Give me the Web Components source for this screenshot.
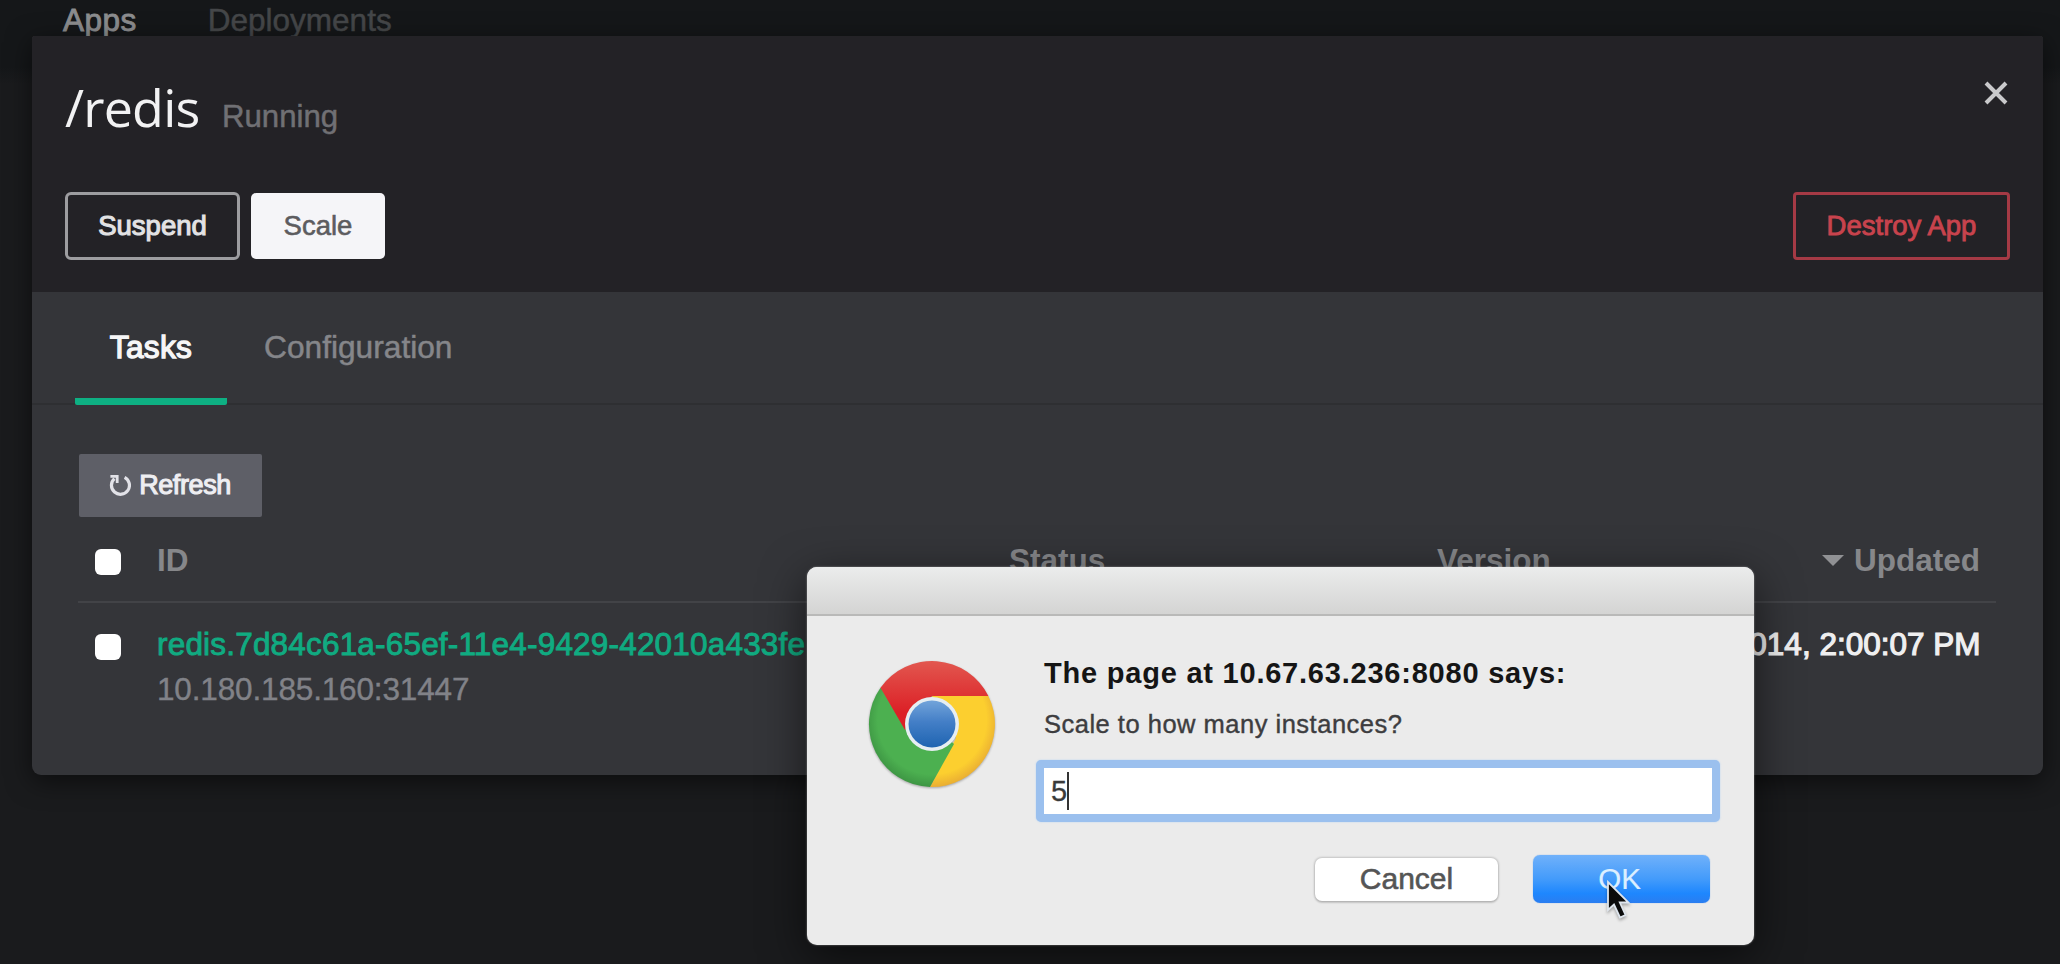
<!DOCTYPE html>
<html lang="en">
<head>
<meta charset="utf-8">
<title>Marathon</title>
<style>
html, body { margin: 0; height: 100%; }
body { overflow: hidden; background: #1a1b1c; font-family: "Liberation Sans", Arial, sans-serif; }
</style>
</head>
<body>
<marathon-page></marathon-page>
<script>
const define = (name, html) => customElements.define(name, class extends HTMLElement {
  constructor() {
    super();
    const t = document.createElement('template');
    t.innerHTML = html;
    this.attachShadow({ mode: 'open' }).append(t.content.cloneNode(true));
  }
});

define('top-nav', `
<style>
:host { display: flex; height: 84px; box-sizing: border-box; padding-left: 63px; gap: 71px;
  background: linear-gradient(#151719 80%, #1a1b1d); font-size: 31.5px; line-height: 40px; color: #454749; -webkit-text-stroke: .5px; }
.on { color: #8c8d8f; -webkit-text-stroke: .9px; letter-spacing: .5px; }
</style><span class="on">Apps</span><span>Deployments</span>`);

define('app-button', `
<style>
:host { display: flex; align-items: center; justify-content: center; box-sizing: border-box;
  width: var(--w); height: 68px; border: 3px solid #9d9da0; border-radius: 6px; color: #e2e2e4;
  font-size: 27.5px; -webkit-text-stroke: 1.1px; }
:host([kind=solid]) { height: 66px; border: 0; border-radius: 5px; background: #f5f5f8; color: #5c5c5f; -webkit-text-stroke: .6px; }
:host([kind=danger]) { border-color: #a53a45; color: #c8434d; border-radius: 4px; -webkit-text-stroke: .9px; }
:host([kind=gray]) { height: 63px; border: 0; border-radius: 2px; background: #5e5f67; color: #eeeef2; font-size: 27px; letter-spacing: -.4px; gap: 8px; padding-right: 1px; -webkit-text-stroke: 1.1px; }
</style><slot></slot>`);

define('close-icon', `
<style>:host { display: block; width: 24px; height: 24px; } svg { display: block; }</style>
<svg width="24" height="24" viewBox="0 0 24 24" stroke="#c9c9cb" stroke-width="4" fill="none"><path d="M2 2L22 22M22 2L2 22"/></svg>`);

define('refresh-icon', `
<style>:host { display: block; width: 22px; height: 22px; margin-top: -2px; } svg { display: block; }</style>
<svg width="22" height="22" viewBox="0 0 22 22" fill="none" stroke="#e2e2e8" stroke-width="3.2"><path d="M15.6 3.3A9 9 0 1 1 5.4 4.6"/><path d="M1.4 2.4H8.2V9" stroke-width="2.8"/></svg>`);

define('app-header', `
<style>
:host { display: block; box-sizing: border-box; height: 256px; padding: 41px 33px 32px; background: #232226; }
.title { display: flex; align-items: baseline; height: 60px; }
h1 { margin: 0; width: 137px; font: 400 52px/60px "Open Sans", sans-serif; color: #f2f2f3; letter-spacing: -.8px; }
.state { margin-left: 20px; font-size: 31.2px; line-height: 40px; color: #707074; -webkit-text-stroke: .5px; }
close-icon { margin: 4px 2px 0 auto; align-self: flex-start; }
.actions { display: flex; align-items: center; gap: 11px; margin-top: 55px; }
.last { margin-left: auto; }
</style>
<div class="title"><h1>/redis</h1><span class="state">Running</span><close-icon></close-icon></div>
<div class="actions">
  <app-button style="--w:175px">Suspend</app-button>
  <app-button kind="solid" style="--w:134px">Scale</app-button>
  <app-button class="last" kind="danger" style="--w:217px">Destroy App</app-button>
</div>`);

define('tab-bar', `
<style>
:host { display: flex; gap: 37px; height: 113px; box-sizing: border-box; padding-left: 43px;
  background: linear-gradient(#2e2f32, #2e2f32) bottom / 100% 2px no-repeat; font-size: 31.7px; line-height: 110px; color: #85868a; -webkit-text-stroke: .5px; }
.on { width: 152px; height: 113px; box-sizing: border-box; border-bottom: 7px solid #0eb083; border-radius: 0 0 2px 2px; text-align: center; color: #f6f6f7; letter-spacing: .3px; -webkit-text-stroke: 1.3px; }
</style><span class="on">Tasks</span><span>Configuration</span>`);

define('check-box', `
<style>:host { display: block; width: 26px; height: 26px; border-radius: 6px; background: #fff; }</style>`);

define('task-table', `
<style>
:host { display: block; margin: 0 47px 0 46px; font-size: 31.5px; }
.row { display: grid; grid-template-columns: 62px 852px 428px 1fr auto; padding: 0 14px 0 17px; }
.head { height: 86px; box-sizing: border-box; padding-top: 2px; border-bottom: 2px solid #424347; align-items: center; font-weight: 700; color: #86878a; }
.head check-box { margin-top: 3px; }
.updated { display: flex; align-items: center; justify-content: flex-end; gap: 9px; padding-right: 2px; }
.data { padding-top: 19px; line-height: 45px; align-items: start; }
.data check-box { margin-top: 12px; }
.id { color: #10ab81; letter-spacing: .19px; -webkit-text-stroke: .9px; }
.host { color: #818288; letter-spacing: -.15px; -webkit-text-stroke: .4px; }
.when { grid-column: 4 / -1; text-align: right; padding-right: 1.5px; color: #efeff0; -webkit-text-stroke: 1.2px; }
</style>
<div class="row head"><check-box></check-box><span>ID</span><span>Status</span><span>Version</span>
  <span class="updated"><svg width="24" height="12" viewBox="0 0 24 12"><path d="M1 1H23L12 12Z" fill="#909194"/></svg>Updated</span></div>
<div class="row data"><check-box></check-box>
  <div><div class="id">redis.7d84c61a-65ef-11e4-9429-42010a433fe</div><div class="host">10.180.185.160:31447</div></div>
  <span class="when">014, 2:00:07 PM</span></div>`);

define('app-modal', `
<style>
:host { display: block; box-sizing: border-box; width: 2011px; height: 739px; overflow: hidden; border-radius: 3px 3px 9px 9px;
  background: #343539; box-shadow: 0 6px 26px rgba(0,0,0,.55); }
.tools { padding: 49px 0 0 47px; }
</style>
<app-header></app-header><tab-bar></tab-bar>
<div class="tools"><app-button kind="gray" style="--w:183px"><refresh-icon></refresh-icon>Refresh</app-button></div>
<task-table></task-table>`);

define('chrome-logo', `
<style>:host { display: block; width: 128px; height: 130px; filter: drop-shadow(0 1px 1px rgba(0,0,0,.3)); } svg { display: block; }</style>
<svg width="128" height="130" viewBox="-64 -64 128 130">
<defs>
<linearGradient id="r" x1="0" y1="0" x2="0" y2="1"><stop offset="0" stop-color="#e2574f"/><stop offset=".75" stop-color="#dc2026"/></linearGradient>
<linearGradient id="b" x1="0" y1="0" x2="0" y2="1"><stop offset="0" stop-color="#72a4da"/><stop offset=".45" stop-color="#447fc7"/><stop offset="1" stop-color="#1e64b1"/></linearGradient>
<radialGradient id="y" gradientUnits="userSpaceOnUse" cx="0" cy="-4" r="68"><stop offset=".8" stop-color="#fccf2f"/><stop offset="1" stop-color="#e8ab33"/></radialGradient>
<radialGradient id="g" gradientUnits="userSpaceOnUse" cx="0" cy="-4" r="68"><stop offset=".8" stop-color="#4cb050"/><stop offset="1" stop-color="#3c9342"/></radialGradient>
</defs>
<path d="M0-28H56.4A63 63 0 0 1-2 63L24 14Z" fill="url(#y)"/>
<path d="M-51.5-36.3A63 63 0 0 0-2 63L22 20L0 0Z" fill="url(#g)"/>
<path d="M-51.5-36.3A63 63 0 0 1 56.4-28H0L-27 6Z" fill="url(#r)"/>
<circle r="27" fill="#e6eef2"/><circle r="23.5" fill="url(#b)"/>
</svg>`);

define('mac-button', `
<style>
:host { display: flex; align-items: center; justify-content: center; width: 183px; height: 43px; border-radius: 7px;
  background: #fff; color: #555; font-size: 30px; -webkit-text-stroke: .6px; box-shadow: 0 0 2px 1px rgba(0,0,0,.17), 0 2px 2px rgba(0,0,0,.12); }
:host([primary]) { box-sizing: border-box; width: 177px; height: 48px; padding-right: 4px; font-size: 29.5px; background: linear-gradient(#70b1fa, #439bfb 50%, #1e87fe 80%, #2a7df0); color: #dcefff; -webkit-text-stroke: .2px; box-shadow: 0 0 1px #4d93e6; }
</style><slot></slot>`);

define('prompt-field', `
<style>
:host { display: flex; align-items: center; box-sizing: border-box; width: 684px; height: 62px; border: 8px solid #9bc0ee; border-radius: 5px;
  padding-left: 7px; background: #fff; color: #3a3a3a; font-size: 29px; -webkit-text-stroke: .3px; box-shadow: 0 0 2px #b7d3f3; }
i { width: 2px; height: 38px; margin-left: -.5px; background: #333; }
</style><slot></slot><i></i>`);

define('prompt-dialog', `
<style>
:host { display: flex; flex-direction: column; box-sizing: border-box; width: 947px; height: 378px; border-radius: 10px; overflow: hidden;
  background: #ebebeb; box-shadow: 0 0 2px rgba(255,255,255,.5), 0 12px 45px rgba(0,0,0,.6); }
.bar { height: 49px; box-sizing: border-box; flex: none; border-bottom: 2px solid #b9b9b8; background: linear-gradient(#ebecec, #d4d4d3); }
.body { display: grid; grid-template-columns: 168px 684px; padding-left: 61px; }
chrome-logo { margin-top: 44px; }
.text { padding: 37px 0 0; }
h2 { margin: 0 0 11px 8px; font-size: 29px; line-height: 40px; letter-spacing: .78px; color: #151515; }
p { margin: 0 0 16px 8px; font-size: 25.5px; line-height: 40px; letter-spacing: .5px; color: #3d3d3f; -webkit-text-stroke: .4px; }
.buttons { display: flex; align-items: center; justify-content: flex-end; gap: 35px; margin-top: 33px; padding-right: 10px; }
</style>
<div class="bar"></div>
<div class="body"><chrome-logo></chrome-logo>
<div class="text"><h2>The page at 10.67.63.236:8080 says:</h2><p>Scale to how many instances?</p>
<prompt-field>5</prompt-field>
<div class="buttons"><mac-button>Cancel</mac-button><mac-button primary>OK</mac-button></div></div></div>`);

define('mouse-pointer', `
<style>:host { display: block; width: 26px; height: 40px; } svg { display: block; filter: drop-shadow(0 2px 1.5px rgba(0,0,0,.3)); }</style>
<svg width="26" height="40" viewBox="0 0 26 40"><path d="M2 2V30L8 24.5L14 37.5L19.5 35L13.8 22.5H22.5Z" fill="#0b0b0b" stroke="#dfe6ee" stroke-width="1.8"/></svg>`);

define('marathon-page', `
<style>
:host { display: block; position: relative; width: 2060px; height: 964px; overflow: hidden; background: #1a1b1d; }
app-modal { position: absolute; left: 32px; top: 36px; }
prompt-dialog { position: absolute; left: 807px; top: 567px; }
mouse-pointer { position: absolute; left: 1606px; top: 880px; }
</style>
<top-nav></top-nav><app-modal></app-modal><prompt-dialog></prompt-dialog><mouse-pointer></mouse-pointer>`);
</script>
</body>
</html>
